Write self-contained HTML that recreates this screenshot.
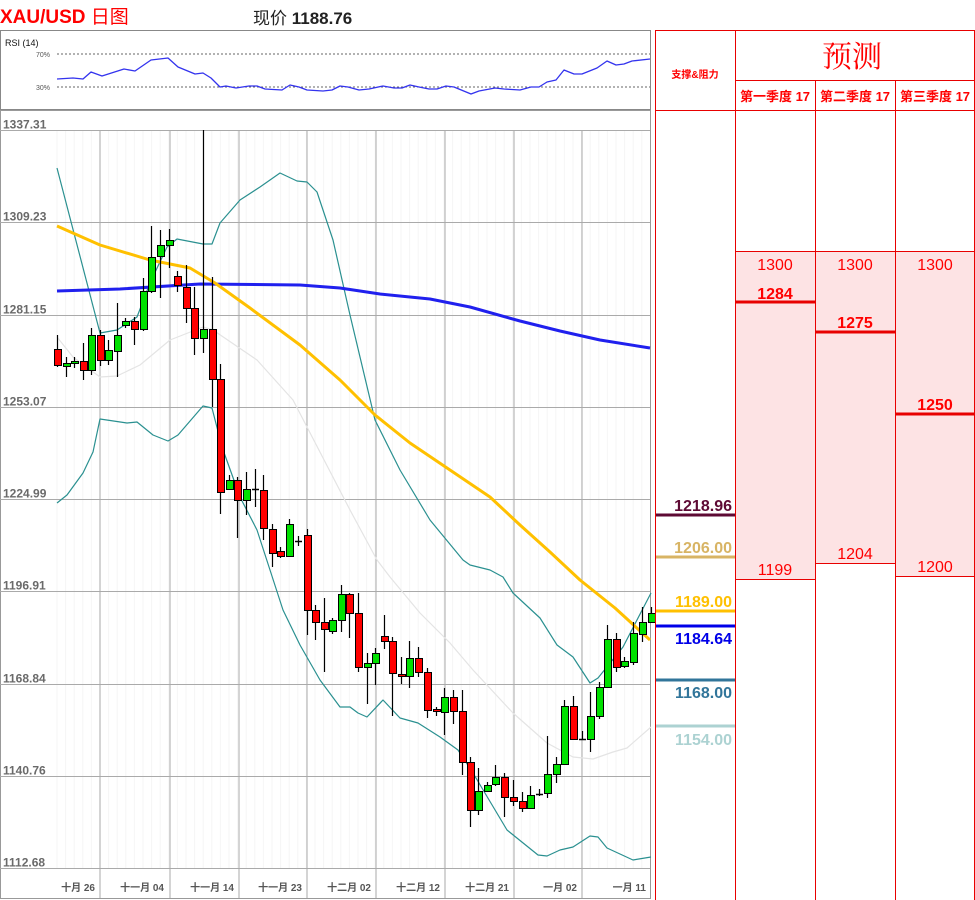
<!DOCTYPE html>
<html><head><meta charset="utf-8">
<style>
html,body{margin:0;padding:0;background:#fff;width:975px;height:900px;overflow:hidden;font-family:"Liberation Sans","Noto Sans CJK SC",sans-serif;}
.abs{position:absolute}
</style></head><body>
<div class="abs" style="left:0;top:2px;font-size:19px;font-weight:bold;color:#f00;">XAU/USD <span style="font-weight:normal">日图</span></div>
<div class="abs" style="left:253px;top:4px;font-size:17px;color:#222;">现价 <b>1188.76</b></div>
<svg id="s" class="abs" style="left:0;top:0" width="975" height="900" xmlns="http://www.w3.org/2000/svg"></svg>
<script>
var s=document.getElementById('s'),h='';
function L(x1,y1,x2,y2,c,w,extra){h+='<line x1="'+x1+'" y1="'+y1+'" x2="'+x2+'" y2="'+y2+'" stroke="'+c+'" stroke-width="'+w+'" '+(extra||'')+'/>';}
function P(pts,c,w){h+='<polyline fill="none" stroke="'+c+'" stroke-width="'+w+'" stroke-linejoin="round" points="'+pts+'"/>';}
function T(x,y,t,st,a){h+='<text x="'+x+'" y="'+y+'" '+(a?'text-anchor="'+a+'" ':'')+'style="'+st+'">'+t+'</text>';}
// RSI panel
h+='<rect x="0.5" y="30.5" width="650" height="79" fill="#fff" stroke="#888"/>';
L(57,54,650,54,'#666',1,'stroke-dasharray="2,2"');L(57,87,650,87,'#666',1,'stroke-dasharray="2,2"');
T(5,46,'RSI (14)','font-size:9px;fill:#111;font-family:Liberation Sans,sans-serif');
T(50,57,'70%','font-size:7px;fill:#555','end');T(50,90,'30%','font-size:7px;fill:#555','end');
P('57,79 73,78 83,79 91,72 102,76 124,69 135,71 151,60 168,58 178,67 195,74 203,73 211,78 220,87 226,86 236,88 249,86 257,86 265,89 282,90 290,85 299,87 307,90 323,91 332,90 340,86 348,87 359,90 369,89 383,86 394,88 402,88 410,85 419,87 429,89 437,89 446,86 454,87 471,94 479,91 495,88 504,89 520,90 531,87 539,87 547,82 556,80 564,70 574,74 582,74 597,68 607,61 616,65 624,64 632,61 650,59','#3333ee',1.3);
// chart
h+='<rect x="0.5" y="110.5" width="650" height="788" fill="#fff" stroke="#999"/>';
for(var x=57;x<650;x+=8.6)L(x,130,x,868,'#f6f6f6',1);
var vx=[100,170,239,307,376,445,514,582];
vx.forEach(function(x){L(x,130,x,898,'#aaa',1)});
var labs=['1337.31','1309.23','1281.15','1253.07','1224.99','1196.91','1168.84','1140.76','1112.68'];
for(var i=0;i<9;i++){var y=Math.round(130+92.25*i)+0.5;L(0,y,650,y,'#aaa',1);T(3,y-2,labs[i],'font-size:12px;fill:#6a6a6a;font-weight:bold');}
var dl=['十月 26','十一月 04','十一月 14','十一月 23','十二月 02','十二月 12','十二月 21','一月 02','一月 11'];
var dx=[95,164,234,302,371,440,509,577,646];
for(i=0;i<9;i++)T(dx[i],891,dl[i],'font-size:10px;fill:#555;font-weight:bold','end');
// bollinger
P('57,168 100,333 117,330 137,317 150,283 167,247 177,239 203,244 212,244 220,223 240,200 260,187 280,173 297,181 307,182 317,192 323,210 333,240 350,315 375,420 400,470 430,520 463,560 470,565 490,570 503,577 513,593 540,618 557,645 573,657 590,683 598,678 623,647 651,593','#2a9090',1.2);
P('57,503 67,495 83,473 93,452 100,419 127,423 137,422 153,435 168,441 178,435 203,406 212,408 222,447 240,497 257,530 283,610 300,645 320,680 340,707 350,707 358,713 367,717 383,700 400,718 418,723 440,737 458,750 473,773 507,830 538,855 547,856 560,850 573,847 590,836 598,837 607,848 633,860 651,857','#2a9090',1.2);
P('57,337 73,357 100,377 117,376 140,365 170,340 203,327 213,330 257,360 293,400 350,510 377,560 390,577 420,613 450,643 473,670 513,713 547,743 573,757 593,759 613,752 627,748 651,727','#e4e4e4',1.2);
P('57,291 120,289 200,284 300,285 340,288 380,294 430,299 470,307 520,321 560,331 600,340 650,348','#2020ee',3);
P('57,226 100,245 150,260 190,268 215,283 250,308 300,345 340,380 375,415 410,443 450,470 490,497 520,525 550,552 580,580 615,608 650,640','#ffc000',3);
var c=[[57,349,365,335,367,0],[66,363,366,357,377,1],[74,361,363,357,368,1],[83,361,370,343,380,0],[91,335,370,328,375,1],[100,335,360,330,366,0],[108,350,360,340,365,1],[117,335,351,303,377,1],[125,321,325,318,328,1],[134,321,329,317,345,0],[143,291,329,278,331,1],[151,257,291,226,293,1],[160,245,256,230,298,1],[169,240,245,229,268,1],[177,276,285,271,292,0],[186,287,308,265,323,0],[194,308,338,287,355,0],[203,329,338,130,353,1],[212,329,379,277,407,0],[220,379,492,364,514,0],[229,480,489,475,490,1],[237,480,500,477,538,0],[246,489,500,472,515,1],[255,489,489,469,507,2],[263,490,528,475,540,0],[272,529,553,524,567,0],[280,551,556,547,558,0],[289,524,556,519,557,1],[298,541,541,536,546,2],[307,535,610,529,635,0],[315,610,622,605,640,0],[324,622,629,598,672,0],[332,620,631,618,634,1],[341,594,620,585,632,1],[349,594,613,593,638,0],[358,613,667,593,672,0],[367,663,667,653,704,1],[375,653,663,648,685,1],[384,636,641,615,649,0],[392,641,673,637,716,0],[401,674,676,657,684,0],[409,658,676,641,688,1],[418,658,672,647,677,0],[427,672,710,668,718,0],[436,709,711,707,716,0],[444,697,712,688,735,1],[453,697,711,690,724,0],[462,711,762,690,775,0],[470,762,810,757,827,0],[478,791,810,768,815,1],[487,785,791,782,792,1],[495,777,784,765,786,1],[504,777,797,773,817,0],[513,797,801,780,806,0],[522,801,808,792,812,0],[530,795,808,786,809,1],[539,794,794,789,796,2],[547,774,793,736,798,1],[556,764,774,757,783,1],[564,706,764,700,764,1],[573,706,739,696,740,0],[582,739,739,731,740,2],[590,716,739,692,752,1],[599,687,716,682,719,1],[607,639,687,625,687,1],[616,639,667,633,672,0],[624,661,666,657,668,1],[633,633,662,622,665,1],[642,622,634,607,642,1],[651,613,622,607,623,1]];
c.forEach(function(k){L(k[0]+0.5,k[3],k[0]+0.5,k[4],'#000',1.2);
 if(k[5]==2){L(k[0]-3,k[1]+0.5,k[0]+4,k[1]+0.5,'#000',1.5);}
 else h+='<rect x="'+(k[0]-3)+'.5" y="'+k[1]+'.5" width="7" height="'+Math.max(k[2]-k[1],2)+'" fill="'+(k[5]?'#00e000':'#ff0000')+'" stroke="#000" stroke-width="1"/>';});
// table
h+='<rect x="735" y="251" width="80" height="328" fill="#fde3e4"/><rect x="815" y="251" width="80" height="312" fill="#fde3e4"/><rect x="895" y="251" width="80" height="325" fill="#fde3e4"/>';
var R='#e80000';
[655.5,735.5,974.5].forEach(function(x){L(x,30,x,900,R,1)});
[815.5,895.5].forEach(function(x){L(x,80,x,900,R,1)});
L(655,30.5,975,30.5,R,1);L(735,80.5,975,80.5,R,1);L(655,110.5,975,110.5,R,1);
L(735,251.5,975,251.5,R,1);L(735,579.5,815,579.5,R,1);L(815,563.5,895,563.5,R,1);L(895,576.5,975,576.5,R,1);
L(736,302,815,302,R,3);L(816,332,895,332,R,3);L(896,414,975,414,R,3);
T(852,67,'预测','font-size:30px;fill:#f00;font-family:Noto Serif CJK SC,serif','middle');
T(695,78,'支撑&amp;阻力','font-size:10px;fill:#f00;font-weight:bold','middle');
T(775,101,'第一季度 17','font-size:13px;fill:#f00;font-weight:bold','middle');
T(855,101,'第二季度 17','font-size:13px;fill:#f00;font-weight:bold','middle');
T(935,101,'第三季度 17','font-size:13px;fill:#f00;font-weight:bold','middle');
var st='font-size:16px;fill:#f00';
T(775,270,'1300',st,'middle');T(855,270,'1300',st,'middle');T(935,270,'1300',st,'middle');
T(775,575,'1199',st,'middle');T(855,559,'1204',st,'middle');T(935,572,'1200',st,'middle');
var sb='font-size:16px;fill:#f00;font-weight:bold';
T(775,299,'1284',sb,'middle');T(855,328,'1275',sb,'middle');T(935,410,'1250',sb,'middle');
var sr=[['1218.96','#5e0a34',511,515],['1206.00','#d8b464',553,557],['1189.00','#ffc000',607,611],['1184.64','#0000e8',644,626],['1168.00','#31759a',698,680],['1154.00','#acd2d2',745,726]];
sr.forEach(function(a){T(732,a[2],a[0],'font-size:16px;font-weight:bold;fill:'+a[1],'end');L(656,a[3],735,a[3],a[1],3);});
s.innerHTML=h;
</script>
</body></html>
